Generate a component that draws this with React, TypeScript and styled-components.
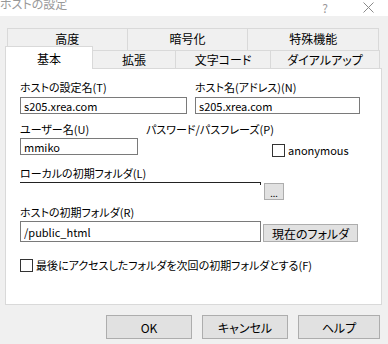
import React from 'react';
import styled, { createGlobalStyle } from 'styled-components';

const GlobalStyle = createGlobalStyle`
  body {
    margin: 0;
    background: #f0f0f0;
    font-family: "Noto Sans CJK JP", "Noto Sans", sans-serif;
    font-size: 11px;
    color: #000;
    font-feature-settings: "palt";
  }
`;

// Window frame
const Window = styled.div`
  width: 388px;
  height: 344px;
  overflow: hidden;
  background: #f0f0f0;
`;

const TitleBar = styled.div`
  display: flex;
  align-items: flex-start;
  height: 16px;
  padding-right: 14px;
  background: #fff;
  overflow: hidden;
  color: #999;
`;

const Title = styled.span`
  flex: 1;
  margin-top: -3px;
  font-size: 12px;
  line-height: 14px;
`;

const HelpMark = styled.span`
  margin-top: 1px;
  margin-right: 35px;
  font-size: 12px;
  line-height: 13px;
`;

const Body = styled.div`
  padding: 0 6px 0 5px;
`;

// Tabs
const BackRow = styled.div`
  display: flex;
  height: 22px;
  margin: 12px 3px 0 2px;
`;

const BackTab = styled.div<{ $w: number }>`
  box-sizing: border-box;
  width: ${(p) => p.$w}px;
  height: 22px;
  margin-left: -1px;
  padding-bottom: 3px;
  border: 1px solid #d9d9d9;
  border-bottom: none;
  background: #f0f0f0;
  display: flex;
  align-items: center;
  justify-content: center;
  font-size: 12px;
  &:first-child {
    margin-left: 0;
  }
`;

const FrontRow = styled.div`
  display: flex;
  align-items: flex-end;
  height: 18px;
`;

const FrontTab = styled.div<{ $w: number; $active?: boolean }>`
  box-sizing: border-box;
  width: ${(p) => p.$w}px;
  height: ${(p) => (p.$active ? 23 : 18)}px;
  margin-left: ${(p) => (p.$active ? 0 : -1)}px;
  margin-bottom: ${(p) => (p.$active ? -1 : 0)}px;
  border: 1px solid #d9d9d9;
  border-bottom: none;
  background: ${(p) => (p.$active ? '#fff' : '#f0f0f0')};
  display: flex;
  align-items: center;
  justify-content: center;
  font-size: 12px;
  ${(p) => (p.$active ? 'position: relative; z-index: 1;' : '')}
`;

const Panel = styled.div`
  box-sizing: border-box;
  height: 237px;
  padding: 11px 0 0 14px;
  border: 1px solid #d9d9d9;
  background: #fff;
`;

// Form parts
const FieldRow = styled.div<{ $mt?: number }>`
  display: flex;
  gap: 8px;
  margin-top: ${(p) => p.$mt ?? 0}px;
`;

const Field = styled.div<{ $w: number }>`
  display: flex;
  flex-direction: column;
  width: ${(p) => p.$w}px;
`;

const Label = styled.div<{ $mt?: number }>`
  line-height: 14px;
  white-space: nowrap;
  margin-top: ${(p) => p.$mt ?? 0}px;
`;

const TextBox = styled.input<{ $w?: number; $h: number; $mt?: number }>`
  box-sizing: border-box;
  width: ${(p) => (p.$w ? `${p.$w}px` : '100%')};
  height: ${(p) => p.$h}px;
  margin: ${(p) => p.$mt ?? 0}px 0 0 0;
  padding: 0 3px;
  border: 1px solid #7a7a7a;
  border-radius: 0;
  background: #fff;
  font: inherit;
  color: #000;
  outline: none;
`;

const CheckRow = styled.label<{ $mt?: number; $pl?: number }>`
  display: flex;
  align-items: center;
  gap: 3px;
  margin-top: ${(p) => p.$mt ?? 0}px;
  padding-left: ${(p) => p.$pl ?? 0}px;
  line-height: 14px;
  white-space: nowrap;
`;

const Box = styled.span`
  box-sizing: border-box;
  width: 13px;
  height: 13px;
  border: 1px solid #333;
  background: #fff;
  flex: none;
`;

const LocalRow = styled.div`
  display: flex;
  align-items: flex-start;
  margin-top: 2px;
`;

const LocalPath = styled.div`
  box-sizing: border-box;
  width: 241px;
  height: 3px;
  border-top: 1px solid #222;
  border-right: 1px solid #222;
`;

const PushButton = styled.button<{ $w: number; $h: number }>`
  box-sizing: border-box;
  width: ${(p) => p.$w}px;
  height: ${(p) => p.$h}px;
  padding: 0;
  border: 1px solid #adadad;
  border-radius: 0;
  background: #e1e1e1;
  font: inherit;
  font-size: 12px;
  color: #000;
  display: flex;
  align-items: center;
  justify-content: center;
`;

const DotsButton = styled(PushButton)`
  margin: 1px 0 0 3px;
  font-size: 9px;
  padding-top: 4px;
`;

const HostRow = styled.div`
  display: flex;
  align-items: flex-end;
  gap: 2px;
  margin-top: 2px;
`;

const ButtonBar = styled.div`
  display: flex;
  justify-content: flex-end;
  gap: 10px;
  margin-top: 10px;
  padding-right: 2px;
`;

const CloseIcon = () => (
  <svg width="11" height="11" viewBox="0 0 11 11" style={{ marginTop: 2 }}>
    <path d="M0.5 0.5 L10.5 10.5 M10.5 0.5 L0.5 10.5" stroke="#8a8a8a" strokeWidth="1" fill="none" />
  </svg>
);

const App = (): JSX.Element => {
  return (
    <Window>
      <GlobalStyle />
      <TitleBar>
        <Title>ホストの設定</Title>
        <HelpMark>?</HelpMark>
        <CloseIcon />
      </TitleBar>
      <Body>
        <BackRow>
          <BackTab $w={121}>高度</BackTab>
          <BackTab $w={122}>暗号化</BackTab>
          <BackTab $w={132}>特殊機能</BackTab>
        </BackRow>
        <FrontRow>
          <FrontTab $w={88} $active>基本</FrontTab>
          <FrontTab $w={84}>拡張</FrontTab>
          <FrontTab $w={96}>文字コード</FrontTab>
          <FrontTab $w={110}>ダイアルアップ</FrontTab>
        </FrontRow>
        <Panel>
          <FieldRow>
            <Field $w={167}>
              <Label>ホストの設定名(T)</Label>
              <TextBox $h={17} $mt={3} value="s205.xrea.com" readOnly />
            </Field>
            <Field $w={165}>
              <Label>ホスト名(アドレス)(N)</Label>
              <TextBox $h={17} $mt={3} value="s205.xrea.com" readOnly />
            </Field>
          </FieldRow>
          <FieldRow $mt={8}>
            <Field $w={118}>
              <Label>ユーザー名(U)</Label>
              <TextBox $h={17} $mt={2} value="mmiko" readOnly />
            </Field>
            <Field $w={200}>
              <Label>パスワード/パスフレーズ(P)</Label>
              <CheckRow $mt={7} $pl={126}>
                <Box />
                anonymous
              </CheckRow>
            </Field>
          </FieldRow>
          <Label $mt={9}>ローカルの初期フォルダ(L)</Label>
          <LocalRow>
            <LocalPath />
            <DotsButton $w={20} $h={17}>...</DotsButton>
          </LocalRow>
          <Label $mt={5}>ホストの初期フォルダ(R)</Label>
          <HostRow>
            <TextBox $w={241} $h={21} value="/public_html" readOnly />
            <PushButton $w={95} $h={18}>現在のフォルダ</PushButton>
          </HostRow>
          <CheckRow $mt={16}>
            <Box />
            最後にアクセスしたフォルダを次回の初期フォルダとする(F)
          </CheckRow>
        </Panel>
        <ButtonBar>
          <PushButton $w={86} $h={24}>OK</PushButton>
          <PushButton $w={86} $h={24}>キャンセル</PushButton>
          <PushButton $w={82} $h={24}>ヘルプ</PushButton>
        </ButtonBar>
      </Body>
    </Window>
  );
};

export default App;
